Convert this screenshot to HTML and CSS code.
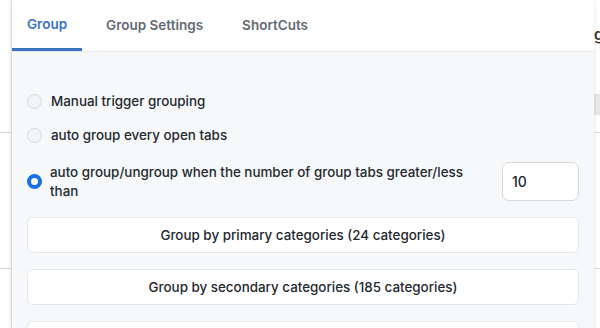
FILE: index.html
```html
<!DOCTYPE html>
<html lang="en">
<head>
  <meta charset="UTF-8" />
  <title>Tab Grouping</title>
  <link rel="stylesheet" href="styles.css">
</head>
<body>
  <div class="backdrop">
    <div class="backdrop-word">g</div>
    <div class="backdrop-bar"></div>
    <div class="backdrop-line line-a"></div>
    <div class="backdrop-line line-b"></div>
  </div>

  <div class="popup">
    <nav class="tabs">
      <div class="tab active">Group</div>
      <div class="tab">Group Settings</div>
      <div class="tab">ShortCuts</div>
    </nav>

    <div class="panel">
      <label class="option">
        <input type="radio" name="mode">
        <span>Manual trigger grouping</span>
      </label>
      <label class="option">
        <input type="radio" name="mode">
        <span>auto group every open tabs</span>
      </label>
      <div class="option option-wide">
        <label class="option-label">
          <input type="radio" name="mode" checked>
          <span>auto group/ungroup when the number of group tabs greater/less than</span>
        </label>
        <input class="count" type="text" value="10">
      </div>

      <button class="group-btn">Group by primary categories (24 categories)</button>
      <button class="group-btn">Group by secondary categories (185 categories)</button>
      <button class="group-btn"></button>
    </div>
  </div>
</body>
</html>
```

FILE: styles.css
```css
* {
  box-sizing: border-box;
}
body {
  margin: 0;
  width: 600px;
  height: 328px;
  overflow: hidden;
  font-family: Inter, 'Noto Sans', sans-serif;
  color: #24292f;
  background: #fff;
  position: relative;
}
.backdrop {
  position: absolute;
  inset: 0;
}
.backdrop-word {
  position: absolute;
  left: 594px;
  top: 25px;
  font-size: 15px;
  font-weight: 600;
  color: #333;
}
.backdrop-bar {
  position: absolute;
  left: 594px;
  top: 94px;
  width: 6px;
  height: 21px;
  background: #e6e6e6;
}
.backdrop-line {
  position: absolute;
  left: 0;
  right: 0;
  height: 1px;
  background: #d8d8d8;
}
.line-a { top: 132px; }
.line-b { top: 268px; }

.popup {
  position: absolute;
  left: 11px;
  top: 0;
  bottom: 0;
  width: 583px;
  overflow: hidden;
  background: #f6f8fa;
  border-left: 1px solid #d6d9dd;
  box-shadow: 0 0 4px rgba(0,0,0,0.12);
}
.tabs {
  display: flex;
  gap: 9px;
  height: 52px;
  background: #fff;
  border-bottom: 1px solid #e8eaed;
}
.tab {
  padding: 0 15px;
  line-height: 50px;
  font-size: 13.5px;
  font-weight: 600;
  color: #636a72;
  border-bottom: 2px solid transparent;
}
.tab.active {
  color: #3b72c4;
  border-bottom: 3px solid #3b72c4;
  line-height: 49px;
}
.panel {
  display: flex;
  flex-direction: column;
  padding: 0 15px;
}
.option {
  display: flex;
  align-items: center;
  gap: 9px;
  font-size: 13.4px;
  font-weight: 500;
  height: 34px;
}
.option:first-child {
  margin-top: 32px;
}
.option input[type=radio] {
  margin: 0;
  width: 15px;
  height: 15px;
  appearance: none;
  border: 1px solid #d6d9dc;
  border-radius: 50%;
  background: #f3f4f6;
  flex: none;
}
.option input[type=radio]:checked {
  border: 4px solid #1a6ee6;
  background: #fff;
}
.option-wide {
  height: auto;
  margin-top: 10px;
  justify-content: space-between;
}
.option-label {
  display: flex;
  align-items: center;
  gap: 8px;
  width: 450px;
  line-height: 19px;
}
.count {
  width: 77px;
  height: 39px;
  border: 1px solid #d5d9dd;
  border-radius: 7px;
  background: #fff;
  padding: 0 9px;
  font-family: inherit;
  font-size: 14px;
  font-weight: 500;
  color: #24292f;
}
.group-btn {
  flex: none;
  height: 36px;
  margin-bottom: 16px;
  border: 1px solid #e4e7ea;
  border-radius: 6px;
  background: #fff;
  font-family: inherit;
  font-size: 13.4px;
  font-weight: 500;
  color: #24292f;
}
.group-btn:first-of-type {
  margin-top: 16px;
}
```
